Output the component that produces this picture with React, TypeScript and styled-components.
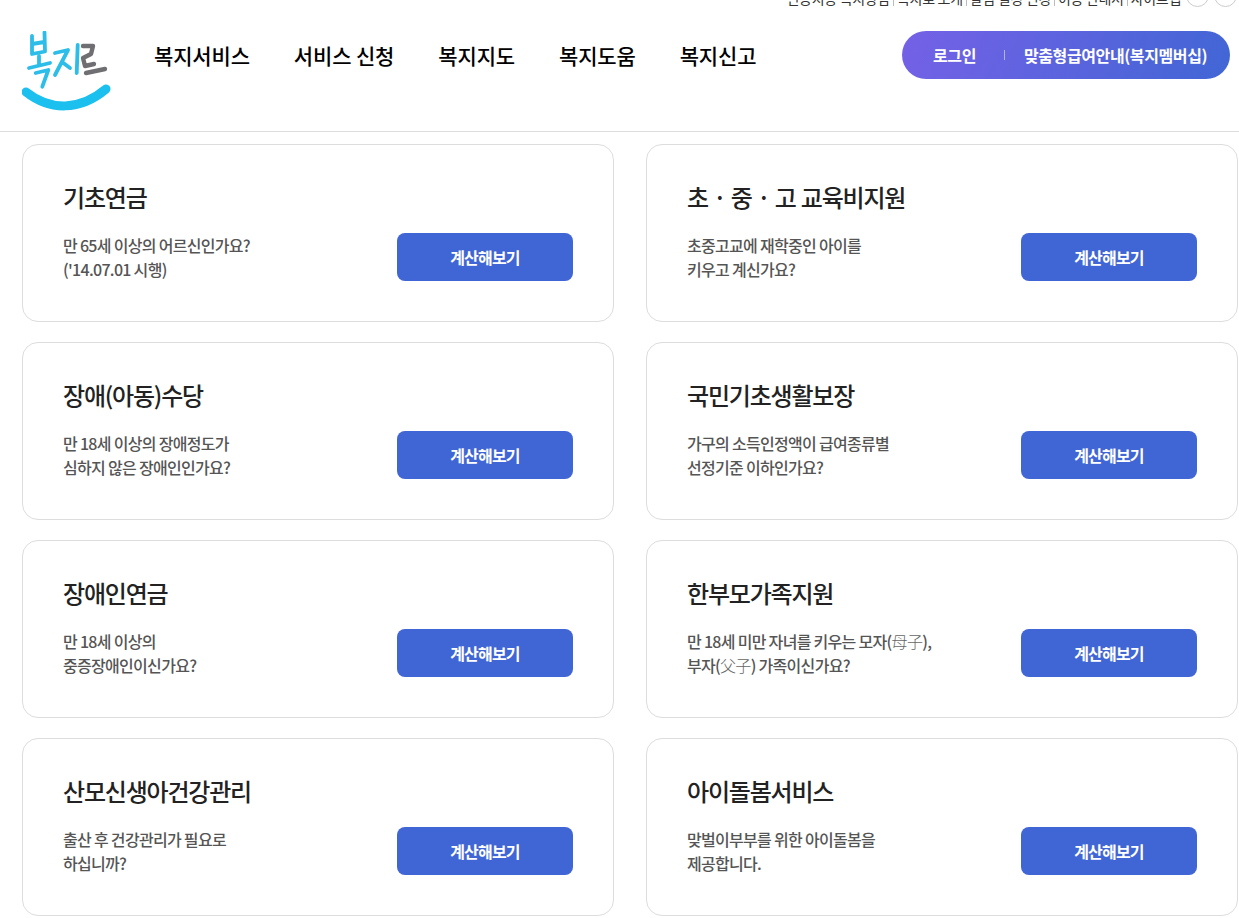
import styled, { createGlobalStyle } from "styled-components";

const GlobalStyle = createGlobalStyle`
  html, body {
    margin: 0;
    padding: 0;
    background: #fff;
    overflow: hidden;
  }
  body {
    font-family: "Noto Sans CJK KR", "Noto Sans", sans-serif;
  }
`;

const Page = styled.div`
  width: 1239px;
  height: 918px;
  overflow: hidden;
`;

const Header = styled.header`
  position: relative;
  height: 131px;
  border-bottom: 1px solid #ddd;
`;

// 상단에 잘려 보이는 안내 문구
const TopNotice = styled.div`
  position: absolute;
  top: -10px;
  right: 58px;
  display: flex;
  gap: 3px;
  font-size: 14px;
  line-height: 16px;
  letter-spacing: -0.3px;
  color: #333;
  white-space: nowrap;
`;

const NoticeItem = styled.span`
  padding-right: 3px;
  border-right: 1px solid #bbb;
  &:last-child {
    padding-right: 0;
    border-right: 0;
  }
`;

const RoundButton = styled.span<{ $right: number }>`
  position: absolute;
  top: -16px;
  right: ${(p) => p.$right}px;
  box-sizing: border-box;
  width: 23px;
  height: 23px;
  border: 1px solid #ccc;
  border-radius: 50%;
`;

const HeaderRow = styled.div`
  display: flex;
  align-items: flex-start;
  padding: 31px 9px 0 22px;
`;

const Logo = styled.svg`
  width: 90px;
  height: 82px;
  flex: none;
`;

const Nav = styled.nav`
  display: flex;
  gap: 44px;
  margin-left: 42px;
  height: 48px;
  align-items: center;
`;

const NavItem = styled.a`
  font-size: 21px;
  font-weight: 500;
  letter-spacing: -0.15px;
  color: #000;
  white-space: nowrap;
`;

const MemberBox = styled.div`
  display: flex;
  align-items: center;
  margin-left: auto;
  width: 328px;
  height: 48px;
  box-sizing: border-box;
  padding-left: 31px;
  border-radius: 24px;
  background: linear-gradient(110deg, #7561e6 0%, #4166d5 100%);
  color: #fff;
  font-size: 16px;
  font-weight: 700;
  letter-spacing: -0.4px;
`;

const Divider = styled.i`
  width: 1px;
  height: 10px;
  margin: 0 19px 0 28px;
  background: rgba(255, 255, 255, 0.5);
`;

const Grid = styled.main`
  display: grid;
  grid-template-columns: 592px 592px;
  grid-auto-rows: 178px;
  column-gap: 32px;
  row-gap: 20px;
  padding: 12px 0 0 22px;
`;

const Card = styled.section`
  box-sizing: border-box;
  border: 1px solid #ddd;
  border-radius: 16px;
  padding: 32px 40px 0;
`;

const CardTitle = styled.h2`
  margin: 0;
  font-size: 24px;
  line-height: 40px;
  font-weight: 500;
  letter-spacing: -1.2px;
  word-spacing: 1px;
  color: #222;
`;

const CardBody = styled.div`
  display: flex;
  align-items: center;
  justify-content: space-between;
  margin-top: 16px;
`;

const Desc = styled.p`
  margin: 0;
  font-size: 16px;
  line-height: 24px;
  font-weight: 500;
  letter-spacing: -0.7px;
  color: #555;
  white-space: pre-line;
`;

// 한자는 본문과 다른 가는 글꼴로 보인다
const Hanja = styled.span`
  font-weight: 300;
  color: #666;
`;

const CalcButton = styled.button`
  width: 176px;
  height: 48px;
  border: 0;
  border-radius: 8px;
  background: #4065d5;
  color: #fff;
  font-family: inherit;
  font-size: 16px;
  font-weight: 700;
  letter-spacing: -0.8px;
`;

const services = [
  { title: "기초연금", desc: "만 65세 이상의 어르신인가요?\n('14.07.01 시행)" },
  { title: "초 · 중 · 고 교육비지원", desc: "초중고교에 재학중인 아이를\n키우고 계신가요?" },
  { title: "장애(아동)수당", desc: "만 18세 이상의 장애정도가\n심하지 않은 장애인인가요?" },
  { title: "국민기초생활보장", desc: "가구의 소득인정액이 급여종류별\n선정기준 이하인가요?" },
  { title: "장애인연금", desc: "만 18세 이상의\n중증장애인이신가요?" },
  {
    title: "한부모가족지원",
    desc: (
      <>
        만 18세 미만 자녀를 키우는 모자(<Hanja>母子</Hanja>),{"\n"}부자(<Hanja>父子</Hanja>) 가족이신가요?
      </>
    ),
  },
  { title: "산모신생아건강관리", desc: "출산 후 건강관리가 필요로\n하십니까?" },
  { title: "아이돌봄서비스", desc: "맞벌이부부를 위한 아이돌봄을\n제공합니다." },
];

const menus = ["복지서비스", "서비스 신청", "복지지도", "복지도움", "복지신고"];
const notices = ["인공지능 복지상담", "복지로 소개", "알림 설정 변경", "이용 안내서", "사이트맵"];

export default function App() {
  return (
    <Page>
      <GlobalStyle />
      <Header>
        <TopNotice>
          {notices.map((notice) => (
            <NoticeItem key={notice}>{notice}</NoticeItem>
          ))}
        </TopNotice>
        <RoundButton $right={30} />
        <RoundButton $right={2} />
        <HeaderRow>
          <Logo viewBox="0 0 90 82" fill="none" strokeLinecap="round" strokeLinejoin="round">
            {/* 복 */}
            <g stroke="#2cbde9" strokeWidth="3.8">
              <path d="M10 5 L10 23 L23 20.5 L22.5 1.5 M10 13 L22.3 11" />
              <path d="M7 37 L28 32 M17 25 L17 34" />
              <path d="M13.7 42 L26.3 39 L20.3 55.7" />
              {/* 지 */}
              <path d="M33 22 L46 19 L33 44 M40 31 L48 37" />
              <path d="M55.7 14 L54.7 42" />
            </g>
            {/* 로 */}
            <path
              d="M61 15 L71 15 L69 23 L61 27 L63 35 L72 33 M64 42 L83 38"
              stroke="#6f6f73"
              strokeWidth="4.4"
            />
            {/* 미소 */}
            <path d="M4 61 C28 80 58 80 84 58" stroke="#1bc0ef" strokeWidth="9" />
          </Logo>
          <Nav>
            {menus.map((menu) => (
              <NavItem key={menu}>{menu}</NavItem>
            ))}
          </Nav>
          <MemberBox>
            <span>로그인</span>
            <Divider />
            <span>맞춤형급여안내(복지멤버십)</span>
          </MemberBox>
        </HeaderRow>
      </Header>
      <Grid>
        {services.map((item) => (
          <Card key={item.title}>
            <CardTitle>{item.title}</CardTitle>
            <CardBody>
              <Desc>{item.desc}</Desc>
              <CalcButton>계산해보기</CalcButton>
            </CardBody>
          </Card>
        ))}
      </Grid>
    </Page>
  );
}
